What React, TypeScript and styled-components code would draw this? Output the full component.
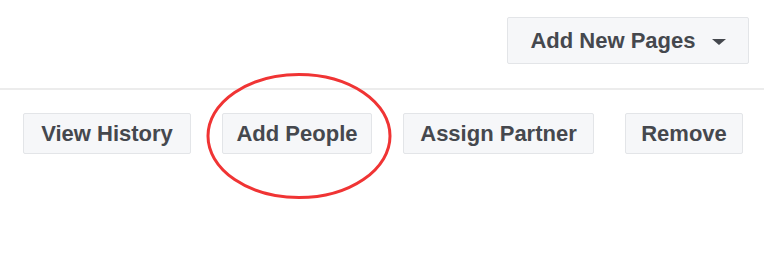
import React from "react";
import styled, { createGlobalStyle } from "styled-components";

const Global = createGlobalStyle`
  html, body { margin: 0; padding: 0; background: #ffffff; }
  body { font-family: "Liberation Sans", Arial, sans-serif; }
`;

const Page = styled.div`
  position: relative;
  width: 764px;
  height: 256px;
  overflow: hidden;
  background: #ffffff;
`;

const Header = styled.div`
  display: flex;
  justify-content: flex-end;
  align-items: flex-start;
  height: 71px;
  padding: 17px 15px 0 0;
  border-bottom: 2px solid #ececec;
`;

const Button = styled.button<{ $width: number; $height?: number }>`
  display: inline-flex;
  align-items: center;
  justify-content: center;
  gap: 16px;
  width: ${(p) => p.$width}px;
  height: ${(p) => p.$height ?? 41}px;
  padding: 0;
  margin: 0;
  background: #f6f7f9;
  border: 1px solid #e3e5e8;
  border-radius: 2px;
  color: #45484e;
  font-family: "Liberation Sans", Arial, sans-serif;
  font-weight: bold;
  font-size: 22px;
  white-space: nowrap;
  box-sizing: border-box;
`;

const Caret = styled.span`
  width: 0;
  height: 0;
  border-left: 7px solid transparent;
  border-right: 7px solid transparent;
  border-top: 6px solid #45484e;
  margin-top: 2px;
`;

const Actions = styled.div`
  display: flex;
  gap: 31px;
  padding: 23px 0 0 23px;
`;

const Circle = styled.svg`
  position: absolute;
  left: 205px;
  top: 72px;
  pointer-events: none;
`;

export default function App() {
  return (
    <Page>
      <Global />
      <Header>
        <Button $width={242} $height={47}>
          Add New Pages
          <Caret />
        </Button>
      </Header>
      <Actions>
        <Button $width={168}>View History</Button>
        <Button $width={150}>Add People</Button>
        <Button $width={191}>Assign Partner</Button>
        <Button $width={118}>Remove</Button>
      </Actions>
      <Circle width="190" height="130" viewBox="0 0 190 130">
        <ellipse
          cx="94"
          cy="64"
          rx="91"
          ry="61.5"
          fill="none"
          stroke="#f03434"
          strokeWidth="3"
        />
      </Circle>
    </Page>
  );
}
